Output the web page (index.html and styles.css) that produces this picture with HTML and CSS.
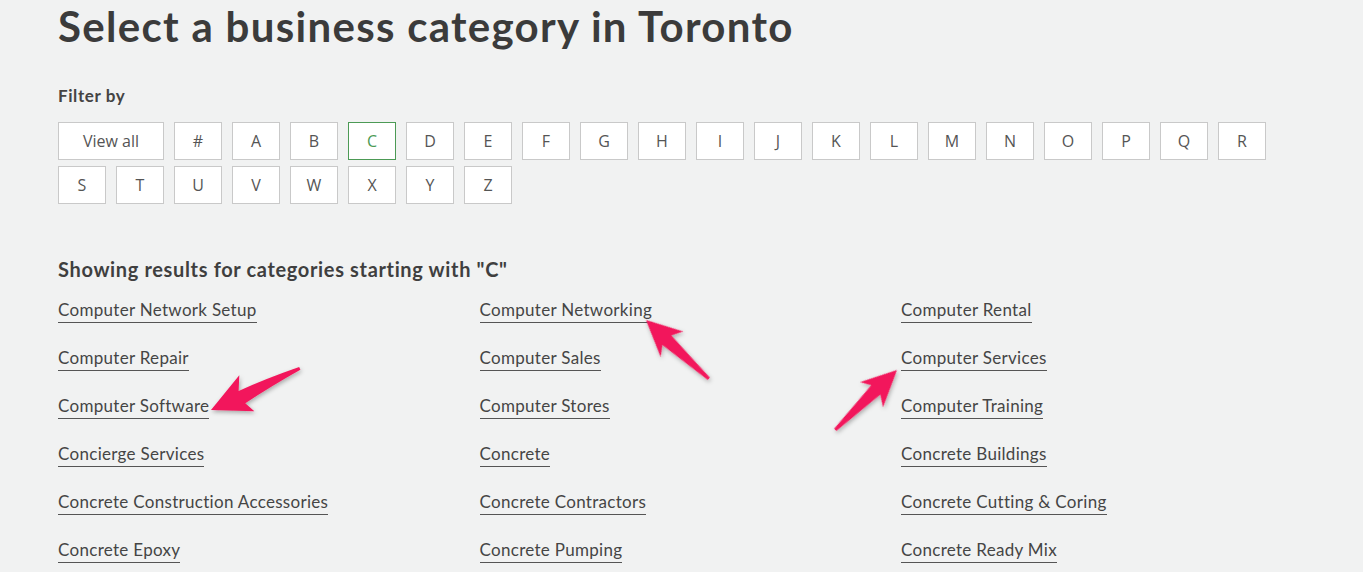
FILE: index.html
```html
<!DOCTYPE html>
<html lang="en">

<head>
    <meta charset="UTF-8">
    <title>Select a business category in Toronto</title>
    <link rel="stylesheet" href="styles.css">
</head>

<body>
    <div id="page">
        <h1 class="title">Select a business category in Toronto</h1>

        <div class="filter">
            <h2 class="filter-label">Filter by</h2>
            <ul class="letters">
                <li><a href="#" class="letter wide">View all</a></li>
                <li><a href="#" class="letter">#</a></li>
                <li><a href="#" class="letter">A</a></li>
                <li><a href="#" class="letter">B</a></li>
                <li><a href="#" class="letter active">C</a></li>
                <li><a href="#" class="letter">D</a></li>
                <li><a href="#" class="letter">E</a></li>
                <li><a href="#" class="letter">F</a></li>
                <li><a href="#" class="letter">G</a></li>
                <li><a href="#" class="letter">H</a></li>
                <li><a href="#" class="letter">I</a></li>
                <li><a href="#" class="letter">J</a></li>
                <li><a href="#" class="letter">K</a></li>
                <li><a href="#" class="letter">L</a></li>
                <li><a href="#" class="letter">M</a></li>
                <li><a href="#" class="letter">N</a></li>
                <li><a href="#" class="letter">O</a></li>
                <li><a href="#" class="letter">P</a></li>
                <li><a href="#" class="letter">Q</a></li>
                <li><a href="#" class="letter">R</a></li>
                <li><a href="#" class="letter">S</a></li>
                <li><a href="#" class="letter">T</a></li>
                <li><a href="#" class="letter">U</a></li>
                <li><a href="#" class="letter">V</a></li>
                <li><a href="#" class="letter">W</a></li>
                <li><a href="#" class="letter">X</a></li>
                <li><a href="#" class="letter">Y</a></li>
                <li><a href="#" class="letter">Z</a></li>
            </ul>
        </div>

        <div class="results">
            <h2 class="results-title">Showing results for categories starting with "C"</h2>
            <ul class="categories">
                <li><a href="#">Computer Network Setup</a></li>
                <li><a href="#">Computer Networking</a></li>
                <li><a href="#">Computer Rental</a></li>
                <li><a href="#">Computer Repair</a></li>
                <li><a href="#">Computer Sales</a></li>
                <li><a href="#">Computer Services</a></li>
                <li><a href="#">Computer Software</a></li>
                <li><a href="#">Computer Stores</a></li>
                <li><a href="#">Computer Training</a></li>
                <li><a href="#">Concierge Services</a></li>
                <li><a href="#">Concrete</a></li>
                <li><a href="#">Concrete Buildings</a></li>
                <li><a href="#">Concrete Construction Accessories</a></li>
                <li><a href="#">Concrete Contractors</a></li>
                <li><a href="#">Concrete Cutting &amp; Coring</a></li>
                <li><a href="#">Concrete Epoxy</a></li>
                <li><a href="#">Concrete Pumping</a></li>
                <li><a href="#">Concrete Ready Mix</a></li>
            </ul>
        </div>

        <!-- annotation arrows drawn over the list -->
        <svg class="arrows" width="1363" height="572" viewBox="0 0 1363 572">
            <defs>
                <filter id="shadow" x="-30%" y="-30%" width="160%" height="160%">
                    <feDropShadow dx="1" dy="2" stdDeviation="2" flood-color="#000" flood-opacity="0.3" />
                </filter>
            </defs>
            <g fill="#f2195b" filter="url(#shadow)">
                <g transform="translate(211 410) rotate(-24.2)">
                    <path d="M0 0 L40 -20 L33 -6 Q64 -6 98 -3 L98 0 Q64 3 34 8 L39 19 Z" />
                </g>
                <g transform="translate(646 320) rotate(43.1)">
                    <path d="M0 0 L35 -17 L29 -6 L86 -1.5 L86 1.5 L29 7 L36 17 Z" />
                </g>
                <g transform="translate(897 370) rotate(135.9)">
                    <path d="M0 0 L36 -17 L29 -6 L86 -1.5 L86 1.5 L29 7 L35 17 Z" />
                </g>
            </g>
        </svg>
    </div>
</body>

</html>
```

FILE: styles.css
```css
* {
    margin: 0;
    padding: 0;
    box-sizing: border-box;
}

body {
    background-color: #f1f2f2;
    color: #3d3d3d;
    font-family: Lato, "Open Sans", sans-serif;
    overflow: hidden;
}

#page {
    position: relative;
    width: 1363px;
    height: 572px;
    padding-left: 58px;
}

.title {
    font-size: 42px;
    font-weight: 700;
    line-height: 50px;
    letter-spacing: 1.3px;
    color: #3b3b3b;
    padding-top: 1px;
}

.filter {
    padding-top: 33px;
}

.filter-label {
    font-size: 17px;
    font-weight: 700;
    line-height: 24px;
    letter-spacing: 0.6px;
    color: #444;
    margin-bottom: 14px;
}

.letters {
    list-style: none;
    display: flex;
    flex-wrap: wrap;
    column-gap: 10px;
    row-gap: 6px;
    width: 1220px;
}

.letter {
    display: flex;
    justify-content: center;
    align-items: center;
    width: 48px;
    height: 38px;
    background-color: #fff;
    border: 1px solid #c9c9c9;
    color: #555;
    font-family: "Open Sans", sans-serif;
    font-size: 16px;
    text-decoration: none;
}

.letter.wide {
    width: 106px;
}

.letter.active {
    border-color: #4c9a55;
    color: #4c9a55;
}

.results {
    padding-top: 52px;
}

.results-title {
    font-size: 20px;
    font-weight: 700;
    line-height: 26px;
    letter-spacing: 0.65px;
    color: #3f3f3f;
    margin-bottom: 16px;
}

.categories {
    list-style: none;
    display: grid;
    grid-template-columns: repeat(3, 421.5px);
    grid-auto-rows: 48px;
}

.categories a {
    font-size: 17px;
    line-height: 24px;
    letter-spacing: 0.3px;
    color: #454545;
    text-decoration: none;
    border-bottom: 1px solid #555;
    padding-bottom: 2px;
}

.arrows {
    position: absolute;
    left: 0;
    top: 0;
    pointer-events: none;
}
```
